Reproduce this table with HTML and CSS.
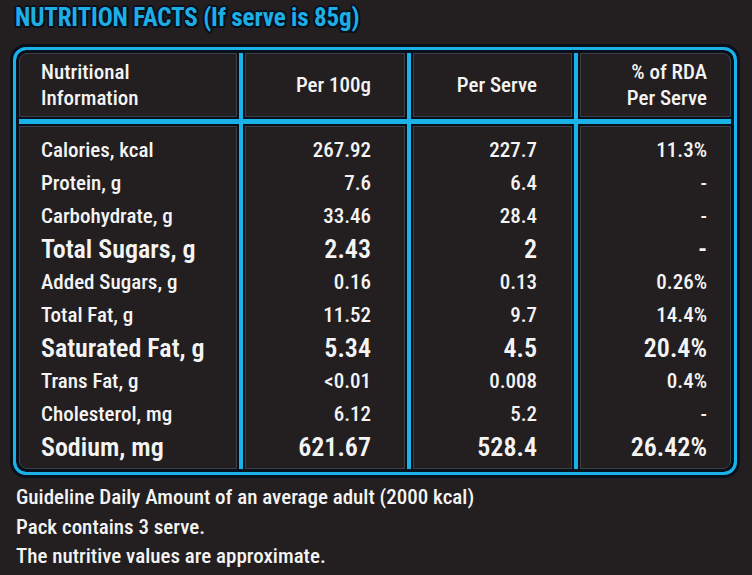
FILE: index.html
```html
<!DOCTYPE html>
<html lang="en">
<head>
<meta charset="utf-8">
<title>Nutrition Facts</title>
<link rel="stylesheet" href="styles.css">
</head>
<body>
<h1 class="title">NUTRITION FACTS (If serve is 85g)</h1>
<div class="facts">
  <div class="cell head c1 tl">Nutritional<br>Information</div>
  <div class="cell head c2">Per 100g</div>
  <div class="cell head c3">Per Serve</div>
  <div class="cell head c4 tr">% of RDA<br>Per Serve</div>

  <div class="cell body c1 bl">
    <div class="row">Calories, kcal</div>
    <div class="row">Protein, g</div>
    <div class="row">Carbohydrate, g</div>
    <div class="row big">Total Sugars, g</div>
    <div class="row">Added Sugars, g</div>
    <div class="row">Total Fat, g</div>
    <div class="row big">Saturated Fat, g</div>
    <div class="row">Trans Fat, g</div>
    <div class="row">Cholesterol, mg</div>
    <div class="row big">Sodium, mg</div>
  </div>
  <div class="cell body c2">
    <div class="row">267.92</div>
    <div class="row">7.6</div>
    <div class="row">33.46</div>
    <div class="row big">2.43</div>
    <div class="row">0.16</div>
    <div class="row">11.52</div>
    <div class="row big">5.34</div>
    <div class="row">&lt;0.01</div>
    <div class="row">6.12</div>
    <div class="row big">621.67</div>
  </div>
  <div class="cell body c3">
    <div class="row">227.7</div>
    <div class="row">6.4</div>
    <div class="row">28.4</div>
    <div class="row big">2</div>
    <div class="row">0.13</div>
    <div class="row">9.7</div>
    <div class="row big">4.5</div>
    <div class="row">0.008</div>
    <div class="row">5.2</div>
    <div class="row big">528.4</div>
  </div>
  <div class="cell body c4 br">
    <div class="row">11.3%</div>
    <div class="row">-</div>
    <div class="row">-</div>
    <div class="row big">-</div>
    <div class="row">0.26%</div>
    <div class="row">14.4%</div>
    <div class="row big">20.4%</div>
    <div class="row">0.4%</div>
    <div class="row">-</div>
    <div class="row big">26.42%</div>
  </div>
</div>
<div class="notes">
  <p>Guideline Daily Amount of an average adult (2000 kcal)</p>
  <p>Pack contains 3 serve.</p>
  <p>The nutritive values are approximate.</p>
</div>
</body>
</html>
```

FILE: styles.css
```css
html, body {
  margin: 0;
  padding: 0;
  background: #231f20;
}

body {
  width: 752px;
  height: 575px;
  overflow: hidden;
  font-family: Roboto, "Open Sans", sans-serif;
  font-stretch: condensed;
  font-weight: 500;
  color: #f4f4f4;
  padding-left: 13px;
  box-sizing: border-box;
}

.title {
  margin: 0 0 0 2px;
  padding-top: 1px;
  font-size: 25px;
  line-height: 34px;
  font-weight: 700;
  letter-spacing: -0.15px;
  color: #1eaee6;
  text-shadow:
    2px 0 0 #08101c, -2px 0 0 #08101c, 0 2px 0 #08101c, 0 -2px 0 #08101c,
    1.5px 1.5px 0 #08101c, -1.5px 1.5px 0 #08101c, 1.5px -1.5px 0 #08101c, -1.5px -1.5px 0 #08101c;
}

.facts {
  margin-top: 12px;
  width: 724px;
  box-sizing: border-box;
  display: grid;
  grid-template-columns: 218px 160px 159px 151px;
  grid-template-rows: 64px 343px;
  gap: 9px 8px;
  padding: 3px;
  border: 3px solid #1bb2e9;
  border-radius: 13px;
  background: #1bb2e9;
  box-shadow: 0 0 0 3px #08101c, inset 0 0 0 3px #08101c;
}

.cell {
  background: #231f20;
  border: 1px solid #3b4048;
  box-shadow: 0 0 0 2px #08101c;
  box-sizing: border-box;
  font-size: 21px;
}

.tl { border-top-left-radius: 8px; }
.tr { border-top-right-radius: 8px; }
.bl { border-bottom-left-radius: 8px; }
.br { border-bottom-right-radius: 8px; }

.head {
  display: flex;
  flex-direction: column;
  justify-content: center;
  line-height: 26px;
}

.head.c1 { align-items: flex-start; padding-left: 21px; }
.head.c2 { align-items: flex-end; text-align: right; padding-right: 33px; }
.head.c3 { align-items: flex-end; text-align: right; padding-right: 34px; }
.head.c4 { align-items: flex-end; text-align: right; padding-right: 23px; }

.body {
  padding-top: 7px;
}

.body.c1 { padding-left: 21px; }
.body.c2 { padding-right: 33px; text-align: right; }
.body.c3 { padding-right: 34px; text-align: right; }
.body.c4 { padding-right: 23px; text-align: right; }

.row {
  height: 33px;
  line-height: 33px;
  font-size: 21px;
  white-space: nowrap;
}

.row.big {
  font-size: 26px;
  font-weight: 600;
}

.notes {
  margin-top: 8px;
  margin-left: 3px;
  font-size: 21px;
  line-height: 29.5px;
}

.notes p {
  margin: 0;
}
```
